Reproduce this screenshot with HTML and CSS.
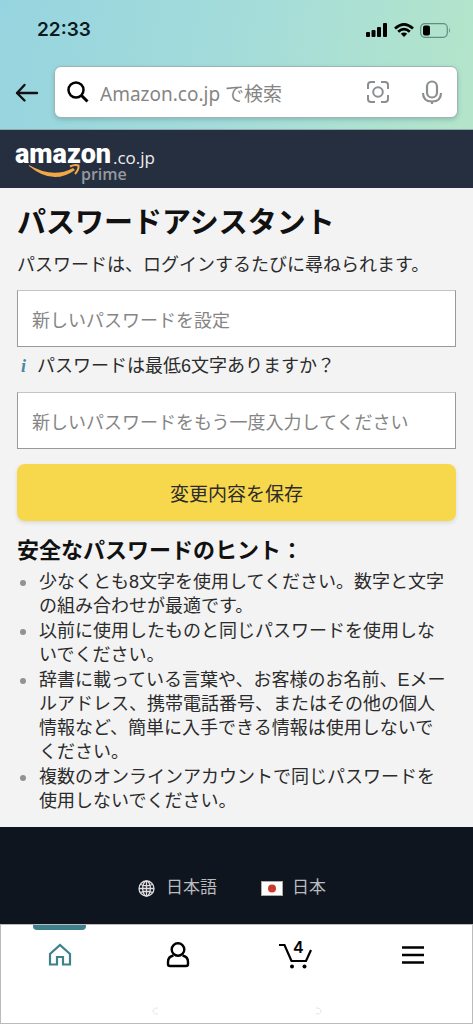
FILE: index.html
```html
<!DOCTYPE html>
<html lang="ja">
<head>
<meta charset="utf-8">
<meta name="viewport" content="width=device-width, initial-scale=1">
<title>パスワードアシスタント</title>
<link rel="stylesheet" href="styles.css">
</head>
<body>
<header class="top">
  <div class="status">
    <span class="clock">22:33</span>
    <div class="status-icons">
      <svg width="22" height="14" viewBox="0 0 22 14"><rect x="0" y="9" width="4" height="5" rx="1"/><rect x="5.500" y="7" width="4" height="7" rx="1"/><rect x="11" y="4" width="4" height="10" rx="1"/><rect x="17" y="0" width="4" height="14" rx="1"/></svg>
      <svg width="20" height="14" viewBox="0 0 20 14" fill="none" stroke="#000" stroke-width="2.7"><path d="M1 5.4Q10-2.8 19 5.4M4.2 8.7Q10 3.4 15.8 8.7"/><path d="M10 14 6.8 10.8Q10 8.2 13.2 10.8Z" fill="#000" stroke="none"/></svg>
      <svg width="31" height="15" viewBox="0 0 31 15"><rect x=".7" y=".7" width="26.6" height="13.6" rx="4" fill="none" stroke="#648d82" stroke-width="1.2"/><rect x="3" y="2.6" width="7" height="9.8" rx="2"/><path d="M29 5q2 2.500 0 5z" fill="#648d82"/></svg>
    </div>
  </div>
  <form class="search-row">
    <button class="icon-btn" type="button" aria-label="戻る"><svg width="24" height="20" viewBox="0 0 24 20" fill="none" stroke="#111" stroke-width="2.4" stroke-linecap="round" stroke-linejoin="round"><path d="M22 11H2M9.500 3 2 11l7.500 7.500"/></svg></button>
    <div class="search">
      <svg width="22" height="22" viewBox="0 0 22 22" fill="none" stroke="#000" stroke-width="2.500"><circle cx="9" cy="9" r="7.500"/><path d="m14.500 14.500 6 6" stroke-width="3"/></svg>
      <input class="search-input" type="text" aria-label="検索" placeholder="Amazon.co.jp で検索">
      <button class="icon-btn" type="button" aria-label="カメラで検索"><svg width="24" height="24" viewBox="0 0 24 24" fill="none" stroke="#8b8f92" stroke-width="2"><path d="M2 9V5q0-3 3-3h4M15 2h4q3 0 3 3v4M22 15v4q0 3-3 3h-4M9 22H5q-3 0-3-3v-4"/><circle cx="12" cy="12" r="4.800"/></svg></button>
      <button class="icon-btn" type="button" aria-label="音声検索"><svg width="20" height="24" viewBox="0 0 20 24" fill="none" stroke="#8b8f92" stroke-width="2.200"><rect x="5" y="1.500" width="10" height="16" rx="5"/><path d="M1 13q0 8.500 9 8.500t9-8.500M10 21v3"/></svg></button>
    </div>
  </form>
</header>
<div class="brand">
  <a class="brand-link" href="#" aria-label="amazon.co.jp prime"><svg class="logo" width="144" height="44" viewBox="0 0 144 44">
    <text class="logo-main" x="0" y="23">amazon</text>
    <text class="logo-domain" x="98" y="24">.co.jp</text>
    <text class="logo-prime" x="66" y="40">prime</text>
    <path d="M14 25Q38 39 58 28l2 2Q38 46 14 26Z" fill="#f3a847"/><path d="M55 26.500q5-2.500 8.500-1 .5 4-3.500 8.500" fill="none" stroke="#f3a847" stroke-width="2"/>
  </svg></a>
</div>
<main class="content">
  <h1 class="title">パスワードアシスタント</h1>
  <p class="intro">パスワードは、ログインするたびに尋ねられます。</p>
  <form class="form">
    <input class="field" type="password" aria-label="新しいパスワードを設定" placeholder="新しいパスワードを設定">
    <p class="note"><i class="info">i</i><span>パスワードは最低6文字ありますか？</span></p>
    <input class="field" type="password" aria-label="新しいパスワードをもう一度入力してください" placeholder="新しいパスワードをもう一度入力してください">
    <button class="save" type="button">変更内容を保存</button>
  </form>
  <h2 class="subtitle">安全なパスワードのヒント：</h2>
  <ul class="tips">
    <li>少なくとも8文字を使用してください。数字と文字の組み合わせが最適です。</li>
    <li>以前に使用したものと同じパスワードを使用しないでください。</li>
    <li>辞書に載っている言葉や、お客様のお名前、Eメールアドレス、携帯電話番号、またはその他の個人情報など、簡単に入手できる情報は使用しないでください。</li>
    <li>複数のオンラインアカウントで同じパスワードを使用しないでください。</li>
  </ul>
</main>
<footer class="footer">
  <a class="locale" href="#"><svg width="17" height="17" viewBox="0 0 17 17" fill="none" stroke="#ddd" stroke-width="1.300"><circle cx="8.500" cy="8.500" r="7.500"/><ellipse cx="8.500" cy="8.500" rx="3.800" ry="7.500"/><path d="M8.500 1v15M1 8.500h15M2.500 4.500q6 2.500 12 0M2.500 12.500q6-2.500 12 0"/></svg>日本語</a>
  <a class="locale" href="#"><svg width="22" height="15" viewBox="0 0 22 15"><rect x=".5" y=".5" width="21" height="14" fill="#fff" stroke="#aaa"/><circle cx="11" cy="7.500" r="4" fill="#cb3a2a"/></svg>日本</a>
</footer>
<nav class="tabs">
  <a class="tab tab-active" href="#" aria-label="ホーム"><svg width="24" height="24" viewBox="0 0 24 24" fill="none" stroke="#3f808d" stroke-width="2.200"><path d="M2 21.500V11L12 2l10 9v10.500h-7V14H9v7.500Z"/></svg></a>
  <a class="tab" href="#" aria-label="アカウント"><svg width="24" height="26" viewBox="0 0 24 26" fill="none" stroke="#000" stroke-width="2.400"><circle cx="12" cy="7.500" r="6.300"/><path d="M7.500 13.500Q2 14.500 2 20v2q0 2 2 2h16q2 0 2-2v-2q0-5.500-5.500-6.500"/></svg></a>
  <a class="tab" href="#" aria-label="カート"><svg width="34" height="28" viewBox="0 0 34 28"><path d="M1 4h5.500l7 16H28l5-11" fill="none" stroke="#000" stroke-width="2.200"/><circle cx="14" cy="25.500" r="2"/><circle cx="26.500" cy="25.500" r="2"/><text class="count" x="15" y="12">4</text></svg></a>
  <a class="tab" href="#" aria-label="メニュー"><svg width="22" height="18" viewBox="0 0 22 18" stroke="#000" stroke-width="2.300"><path d="M0 1.500h22M0 9h22M0 16.500h22"/></svg></a>
  <svg class="home-marks" width="170" height="8" viewBox="0 0 170 8" fill="none" stroke="#e6e6e6"><path d="M6 1Q1 1 1 4t5 3M164 1q5 0 5 3t-5 3"/></svg>
</nav>
</body>
</html>
```
FILE: styles.css
```css
* { box-sizing: border-box; }
body {
  margin: 0;
  min-height: 100vh;
  display: flex;
  flex-direction: column;
  background: #f3f3f3;
  color: #2b2b2b;
  font: 18px/24px "Liberation Sans", "Noto Sans CJK JP", sans-serif;
}
svg { display: block; flex: none; overflow: visible; }
h1, h2, p, ul { margin: 0; padding: 0; }
a { color: inherit; text-decoration: none; }
button, input { font: inherit; }
.top {
  padding: 16px 15px 11px;
  background: linear-gradient(100deg, #96d4df, #a4dcda 50%, #b4e5ca);
  border-bottom: 1px solid #8fa9ad;
}
.status {
  display: flex;
  align-items: center;
  justify-content: space-between;
  height: 28px;
  padding: 0 7px 0 22px;
}
.clock { font: 600 19px/28px Inter, sans-serif; color: #0b1a1e; }
.status-icons { display: flex; align-items: center; gap: 6px; }
.icon-btn { padding: 0; border: 0; background: none; }
.search-row { display: flex; align-items: center; gap: 15px; margin-top: 22px; }
.search {
  flex: 1;
  min-width: 0;
  height: 52px;
  display: flex;
  align-items: center;
  padding: 0 15px 0 12px;
  border: 1px solid #9fb5b5;
  border-radius: 7px;
  background: #fff;
  box-shadow: 0 2px 4px #5a8c8c66;
}
.search-input {
  flex: 1;
  min-width: 0;
  padding: 4px 0 0;
  margin-left: 11px;
  border: 0;
  outline: 0;
  background: none;
  font: 19px/28px "Noto Sans", "Noto Sans CJK JP", sans-serif;
}
.search .icon-btn + .icon-btn { margin-left: 32px; }
::placeholder { color: #858585; opacity: 1; }
.brand { background: #252f3f; padding: 10px 15px 4px; }
.brand-link { display: block; }
.logo-main { font: 900 27px Roboto, sans-serif; fill: #fff; }
.logo-domain { font: 17px "Open Sans", sans-serif; fill: #eee; }
.logo-prime { font: 600 16px "Open Sans", sans-serif; fill: #96999f; }
.content { padding: 16px 17px 14px; }
.title { font-size: 29px; line-height: 38px; color: #111; }
.intro { margin-top: 11px; }
.form { display: flex; flex-direction: column; margin-top: 13px; }
.field {
  width: 100%;
  height: 57px;
  padding: 5px 14px 0;
  border: 1px solid #999;
  border-top-color: #c4c4c4;
  border-radius: 0;
  background: #fff;
}
.note { display: flex; gap: 11px; padding: 7px 0 14px 4px; }
.info { font: italic bold 18px/24px "Liberation Serif", serif; color: #4a87a5; }
.save {
  height: 57px;
  margin-top: 15px;
  padding: 4px 0 0;
  border: 0;
  border-radius: 8px;
  background: #f7d84c;
  color: #2b2b2b;
  font-size: 19px;
  box-shadow: 0 2px 4px #0000001a;
}
.subtitle { margin-top: 15px; font-size: 22px; line-height: 30px; color: #111; }
.tips {
  display: flex;
  flex-direction: column;
  gap: 1px;
  margin-top: 4px;
  list-style: none;
  line-break: anywhere;
}
.tips li { display: grid; grid-template-columns: 6px 1fr; gap: 13px; padding: 0 5px 0 3px; }
.tips li::before {
  content: "";
  width: 6px;
  height: 6px;
  margin-top: 10px;
  border-radius: 50%;
  background: #929292;
}
.footer {
  display: flex;
  justify-content: center;
  gap: 44px;
  padding: 49px 9px 24px 0;
  background: #0f151f;
  color: #b9bbbe;
}
.locale { display: flex; align-items: center; gap: 11px; font-size: 17px; }
.locale + .locale { gap: 9px; }
.tabs {
  position: relative;
  flex: 1;
  min-height: 99px;
  display: grid;
  grid-template-columns: repeat(4, 1fr);
  border: 1px solid #bbb;
  background: #fff;
}
.tab { display: flex; height: 59px; align-items: center; justify-content: center; position: relative; }
.tab-active::before {
  content: "";
  position: absolute;
  top: 0;
  width: 53px;
  height: 5px;
  border-radius: 0 0 4px 4px;
  background: #3f808d;
}
.count { font: 600 16px Inter, sans-serif; }
.home-marks { position: absolute; left: 50%; bottom: 8px; margin-left: -85px; }
```
